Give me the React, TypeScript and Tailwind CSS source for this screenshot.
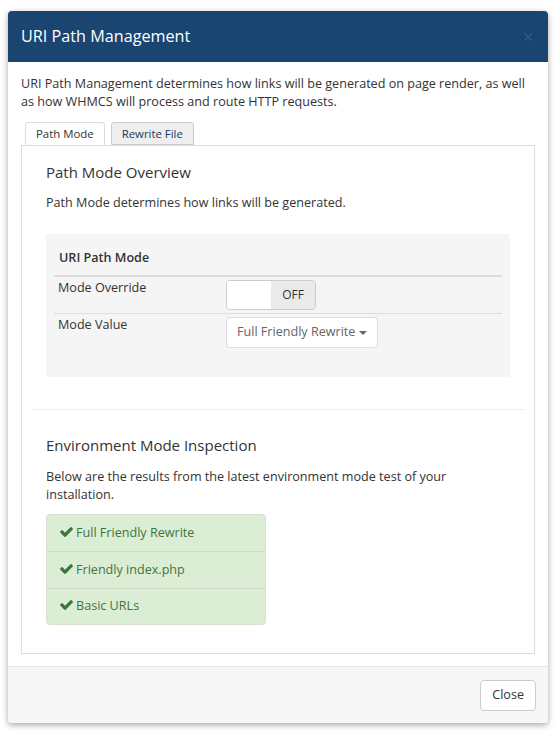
const Check = () => (
  <svg width="13" height="11" viewBox="0 0 1550 1300" className="inline-block mr-[3px] -mt-[2px]" fill="#3c763d">
    <path d="M1550 232q0 40-28 68l-724 724-136 136q-28 28-68 28t-68-28l-136-136-362-362q-28-28-28-68t28-68l136-136q28-28 68-28t68 28l294 295 656-657q28-28 68-28t68 28l136 136q28 28 28 68z" />
  </svg>
)

const App = () => {
  const results = ['Full Friendly Rewrite', 'Friendly index.php', 'Basic URLs']

  return (
    <div className="min-h-[738px] bg-white pt-[11px] px-[8px] text-[12.6px] text-[#333] font-['Open_Sans',sans-serif]">
      <div className="w-[540px] bg-white rounded-[4px] shadow-[0_2px_6px_rgba(0,0,0,0.35)] overflow-hidden">
        <div className="h-[51px] bg-[#1a4571] flex items-center justify-between pl-[13px] pr-[14px]">
          <h4 className="text-[16.2px] text-white">URI Path Management</h4>
          <span className="text-[20px] leading-none text-[#2c5a86]">×</span>
        </div>

        <div className="px-[13px] pt-[13px] pb-[12px]">
          <p className="leading-[18px]">
            URI Path Management determines how links will be generated on page render, as well as how WHMCS will
            process and route HTTP requests.
          </p>

          <div className="mt-[11px] flex pl-[4px] gap-[6px]">
            <div className="px-[10px] h-[23px] flex items-center border border-[#ddd] border-b-white bg-white rounded-t-[3px] text-[11.4px] -mb-px relative">
              Path Mode
            </div>
            <div className="px-[10px] h-[23px] flex items-center border border-[#ccc] bg-[#eee] rounded-t-[3px] text-[11.4px] text-[#1a3a5e]">
              Rewrite File
            </div>
          </div>

          <div className="border border-[#ddd] px-[9px] pb-[14px]">
            <div className="px-[15px]">
              <h3 className="text-[15px] mt-[15px] leading-[22px]">Path Mode Overview</h3>
              <p className="mt-[11px] leading-[18px]">Path Mode determines how links will be generated.</p>

              <div className="mt-[22px] bg-[#f5f5f5] px-[8px] pt-[15px] pb-[29px]">
                <div className="font-semibold px-[5px] pb-[7px] border-b-2 border-[#ddd]">URI Path Mode</div>
                <div className="flex border-b border-[#ddd] h-[37px] pt-[3px]">
                  <div className="w-[172px] px-[4px] pt-[1px] leading-[14px]">Mode Override</div>
                  <div className="flex w-[90px] h-[30px] border border-[#ccc] rounded-[4px] overflow-hidden">
                    <div className="w-[44px] bg-white" />
                    <div className="flex-1 bg-[#eaeaea] flex items-center justify-center text-[12px] text-[#333]">OFF</div>
                  </div>
                </div>
                <div className="flex pt-[3px]">
                  <div className="w-[172px] px-[4px] pt-[1px] leading-[14px]">Mode Value</div>
                  <div className="h-[31px] px-[10px] border border-[#ddd] rounded-[4px] bg-white flex items-center text-[#666]">
                    Full Friendly Rewrite
                    <span className="ml-[4px] mt-[1px] border-x-[4px] border-x-transparent border-t-[4px] border-t-[#666]" />
                  </div>
                </div>
              </div>
            </div>

            <hr className="mt-[32px] border-t border-[#eee]" />

            <div className="px-[15px]">
              <h3 className="text-[15px] mt-[24px] leading-[22px]">Environment Mode Inspection</h3>
              <p className="mt-[12px] leading-[18px] pr-[30px]">
                Below are the results from the latest environment mode test of your installation.
              </p>
              <div className="mt-[10px] w-[220px] border border-[#d6e1cf] rounded-[4px] bg-[#dcedd5] text-[#3c763d]">
                {results.map((r, i) => (
                  <div key={r} className={`h-[36.5px] flex items-center pl-[13px] ${i > 0 ? 'border-t border-[#cfdcc8]' : ''}`}>
                    <Check />
                    {r}
                  </div>
                ))}
              </div>
              <div className="h-[14px]" />
            </div>
          </div>
        </div>

        <div className="bg-[#f7f7f8] border-t border-[#e5e5e5] h-[57px] flex items-center justify-end pr-[12px]">
          <button className="h-[31px] px-[11px] border border-[#ccc] rounded-[4px] bg-white text-[12.6px] text-[#333]">
            Close
          </button>
        </div>
      </div>
    </div>
  )
}

export default App
